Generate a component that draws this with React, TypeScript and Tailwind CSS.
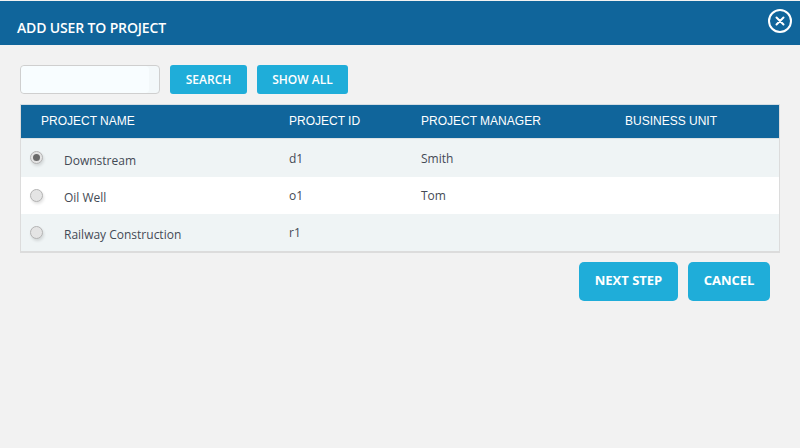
const rows = [
  { name: 'Downstream', id: 'd1', manager: 'Smith', checked: true, bg: 'bg-[#eff4f5]', h: 'h-[38px]' },
  { name: 'Oil Well', id: 'o1', manager: 'Tom', checked: false, bg: 'bg-white', h: 'h-[37px]' },
  { name: 'Railway Construction', id: 'r1', manager: '', checked: false, bg: 'bg-[#eff4f5]', h: 'h-[37px]' },
];

function Radio({ checked }: { checked: boolean }) {
  return (
    <span className="flex h-[13px] w-[13px] items-center justify-center rounded-full border border-[#b4b4b4] bg-[#e4e4e4] shadow-[1px_2px_3px_rgba(0,0,0,0.12)]">
      {checked && <span className="h-[7px] w-[7px] rounded-full bg-[#6a6a6a]" />}
    </span>
  );
}

export default function App() {
  return (
    <div className="h-[448px] w-[800px] overflow-hidden bg-[#f2f2f2] pt-px font-['Open_Sans',sans-serif]">
      {/* Title bar */}
      <div className="flex h-[44px] items-start justify-between bg-[#10659b] pl-[17px] pr-2 text-white">
        <h1 className="mt-[16px] text-[14px] leading-[22px] font-semibold tracking-[-0.15px]">ADD USER TO PROJECT</h1>
        <button className="mt-[8px] flex h-6 w-6 items-center justify-center rounded-full border-2 border-white">
          <svg width="10" height="10" viewBox="0 0 10 10" fill="none" stroke="white" strokeWidth="2" strokeLinecap="round">
            <path d="M1.5 1.5l7 7M8.5 1.5l-7 7" />
          </svg>
        </button>
      </div>

      {/* Search */}
      <div className="mt-[20px] flex h-[29px] gap-[10px] pl-[20px]">
        <div className="w-[140px] rounded-[4px] border border-[#cfcfcf] bg-[#f3f8fa] pr-[10px]">
          <input className="h-full w-full rounded-[4px] bg-[#f8fdff] outline-none" />
        </div>
        <button className="w-[77px] rounded-[3px] bg-[#1fadd9] text-[12px] font-semibold text-white">SEARCH</button>
        <button className="w-[91px] rounded-[3px] bg-[#1fadd9] text-[12px] font-semibold text-white">SHOW ALL</button>
      </div>

      {/* Table */}
      <div className="mx-[20px] mt-[10px] w-[760px] border border-[#dcdcdc] border-b-2 border-t-[#d4dde3]">
        <div className="flex h-[33px] items-center bg-[#10659b] pb-[2px] font-['Liberation_Sans',sans-serif] text-[12px] text-white">
          <span className="w-[268px] pl-[20px]">PROJECT NAME</span>
          <span className="w-[132px]">PROJECT ID</span>
          <span className="w-[204px]">PROJECT MANAGER</span>
          <span>BUSINESS UNIT</span>
        </div>
        <div className="border-t border-[#dde3e5]">
          {rows.map((row) => (
            <div key={row.id} className={`flex items-center text-[12px] text-[#444a55] ${row.bg} ${row.h}`}>
              <span className="flex w-[43px] justify-start pb-[1px] pl-[9px]">
                <Radio checked={row.checked} />
              </span>
              <span className="mt-[5px] w-[225px]">{row.name}</span>
              <span className="mt-[1px] w-[132px]">{row.id}</span>
              <span className="mt-[1px]">{row.manager}</span>
            </div>
          ))}
        </div>
      </div>

      {/* Actions */}
      <div className="mt-[9px] flex justify-end gap-[10px] pr-[30px]">
        <button className="h-[39px] w-[99px] rounded-[5px] bg-[#1fadd9] pb-[1px] text-[13px] font-bold text-white">NEXT STEP</button>
        <button className="h-[39px] w-[82px] rounded-[5px] bg-[#1fadd9] pb-[1px] text-[13px] font-bold text-white">CANCEL</button>
      </div>
    </div>
  );
}
